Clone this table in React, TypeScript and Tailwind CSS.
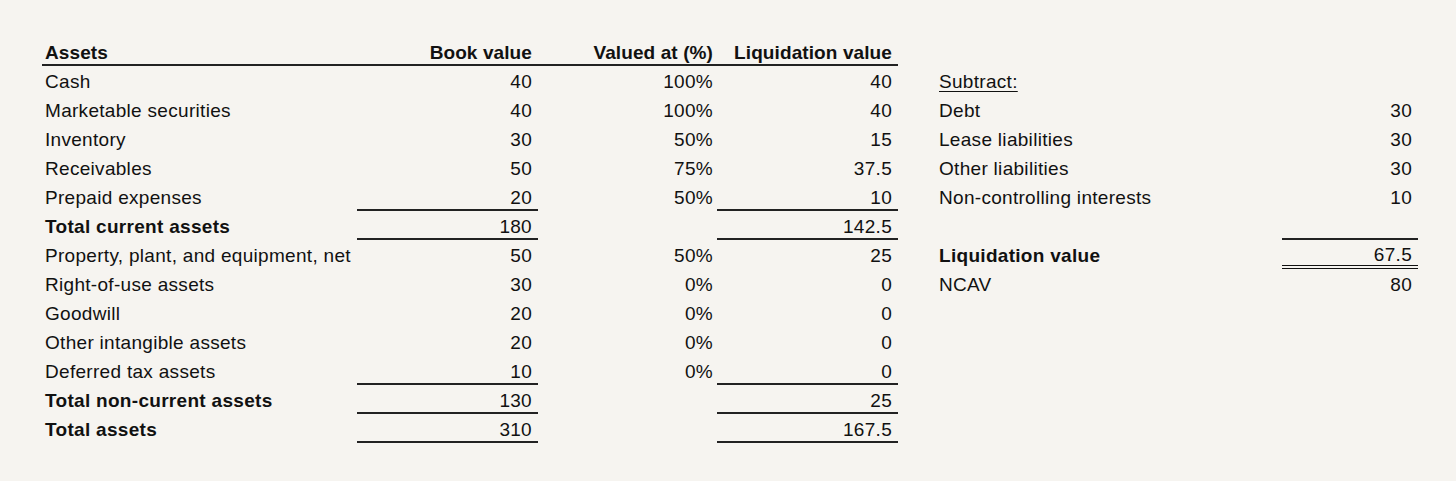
import { clsx as cn } from 'clsx';

type Line = 'none' | 'single' | 'double';

type Row = {
  label: string;
  bold?: boolean;
  book?: string;
  pct?: string;
  liq?: string;
  bookLine?: boolean;
  liqLine?: boolean;
};

const ROWS: Row[] = [
  { label: 'Cash', book: '40', pct: '100%', liq: '40' },
  { label: 'Marketable securities', book: '40', pct: '100%', liq: '40' },
  { label: 'Inventory', book: '30', pct: '50%', liq: '15' },
  { label: 'Receivables', book: '50', pct: '75%', liq: '37.5' },
  { label: 'Prepaid expenses', book: '20', pct: '50%', liq: '10', bookLine: true, liqLine: true },
  { label: 'Total current assets', bold: true, book: '180', liq: '142.5', bookLine: true, liqLine: true },
  { label: 'Property, plant, and equipment, net', book: '50', pct: '50%', liq: '25' },
  { label: 'Right-of-use assets', book: '30', pct: '0%', liq: '0' },
  { label: 'Goodwill', book: '20', pct: '0%', liq: '0' },
  { label: 'Other intangible assets', book: '20', pct: '0%', liq: '0' },
  { label: 'Deferred tax assets', book: '10', pct: '0%', liq: '0', bookLine: true, liqLine: true },
  { label: 'Total non-current assets', bold: true, book: '130', liq: '25', bookLine: true, liqLine: true },
  { label: 'Total assets', bold: true, book: '310', liq: '167.5', bookLine: true, liqLine: true },
];

const SIDE: { label: string; value?: string; bold?: boolean; underline?: boolean; line?: Line }[] = [
  { label: 'Subtract:', underline: true },
  { label: 'Debt', value: '30' },
  { label: 'Lease liabilities', value: '30' },
  { label: 'Other liabilities', value: '30' },
  { label: 'Non-controlling interests', value: '10' },
  { label: '', line: 'single' },
  { label: 'Liquidation value', bold: true, value: '67.5', line: 'double' },
  { label: 'NCAV', value: '80' },
];

function Cell({
  children,
  className,
  line = 'none',
}: {
  children?: React.ReactNode;
  className?: string;
  line?: Line;
}) {
  return (
    <div
      className={cn(
        'box-border flex h-[29px] items-center pt-[5px]',
        line === 'double' ? 'border-b-4 border-double border-[#111]' : 'border-b-2',
        line === 'single' ? 'border-[#222]' : line === 'none' ? 'border-transparent' : '',
        className,
      )}
    >
      {children}
    </div>
  );
}

export default function App() {
  return (
    <div
      className="min-h-[481px] w-[1456px] bg-[#f6f4f0] pl-[42px] pt-[37px] text-[19px] tracking-[0.3px] text-[#111]"
      style={{ fontFamily: '"Liberation Sans", Arial, sans-serif' }}
    >
      <div className="flex">
        <div className="w-[856px]">
          <div className="flex border-b-2 border-[#222] font-bold tracking-[0.1px]">
            <div className="box-border flex h-[27px] w-[315px] items-center pl-[3px] pt-[5px]">Assets</div>
            <div className="box-border flex h-[27px] w-[181px] items-center justify-end pr-[6px] pt-[5px]">Book value</div>
            <div className="box-border flex h-[27px] w-[179px] items-center justify-end pr-[4px] pt-[5px]">Valued at (%)</div>
            <div className="box-border flex h-[27px] w-[181px] items-center justify-end pr-[6px] pt-[5px]">Liquidation value</div>
          </div>
          {ROWS.map((r) => (
            <div key={r.label} className="flex">
              <Cell className={cn('w-[315px] pl-[3px]', r.bold && 'font-bold')}>{r.label}</Cell>
              <Cell className="w-[181px] justify-end pr-[6px]" line={r.bookLine ? 'single' : 'none'}>
                {r.book}
              </Cell>
              <Cell className="w-[179px] justify-end pr-[4px]">{r.pct}</Cell>
              <Cell className="w-[181px] justify-end pr-[6px]" line={r.liqLine ? 'single' : 'none'}>
                {r.liq}
              </Cell>
            </div>
          ))}
        </div>

        <div className="ml-[38px] mt-[29px]">
          {SIDE.map((s, i) => (
            <div key={i} className="flex">
              <Cell className={cn('w-[346px] pl-[3px]', s.bold && 'font-bold')}>
                <span className={cn(s.underline && 'underline underline-offset-[3px] decoration-1')}>{s.label}</span>
              </Cell>
              <Cell className="w-[136px] justify-end pr-[6px]" line={s.line}>
                {s.value}
              </Cell>
            </div>
          ))}
        </div>
      </div>
    </div>
  );
}
